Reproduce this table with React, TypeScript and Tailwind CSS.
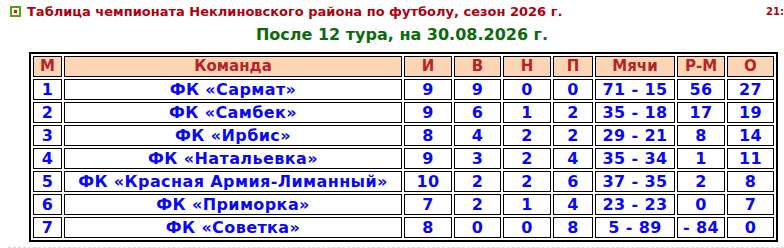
const rows = [
  { m: 1, team: 'ФК «Сармат»', i: 9, w: 9, d: 0, l: 0, goals: '71 - 15', diff: '56', pts: 27 },
  { m: 2, team: 'ФК «Самбек»', i: 9, w: 6, d: 1, l: 2, goals: '35 - 18', diff: '17', pts: 19 },
  { m: 3, team: 'ФК «Ирбис»', i: 8, w: 4, d: 2, l: 2, goals: '29 - 21', diff: '8', pts: 14 },
  { m: 4, team: 'ФК «Натальевка»', i: 9, w: 3, d: 2, l: 4, goals: '35 - 34', diff: '1', pts: 11 },
  { m: 5, team: 'ФК «Красная Армия-Лиманный»', i: 10, w: 2, d: 2, l: 6, goals: '37 - 35', diff: '2', pts: 8 },
  { m: 6, team: 'ФК «Приморка»', i: 7, w: 2, d: 1, l: 4, goals: '23 - 23', diff: '0', pts: 7 },
  { m: 7, team: 'ФК «Советка»', i: 8, w: 0, d: 0, l: 8, goals: '5 - 89', diff: '- 84', pts: 0 },
];

const head = [
  { label: 'М', w: 'w-[29px]' },
  { label: 'Команда', w: 'w-[338px]' },
  { label: 'И', w: 'w-[48px]' },
  { label: 'В', w: 'w-[47px]' },
  { label: 'Н', w: 'w-[48px]' },
  { label: 'П', w: 'w-[40px]' },
  { label: 'Мячи', w: 'w-[80px]' },
  { label: 'Р-М', w: 'w-[48px]' },
  { label: 'О', w: 'w-[47px]' },
];

const cell = 'h-[21px] p-0 border border-black text-center align-middle leading-[19px] whitespace-nowrap';

export default function App() {
  return (
    <div className="w-[784px] h-[248px] overflow-hidden bg-white font-['DejaVu_Sans',Verdana,sans-serif] font-bold">
      <div className="flex items-start pt-[5px] pl-[10px] h-[22px]">
        <span className="mt-[1px] w-[11px] h-[11px] border-2 border-[#5f9e10] flex items-center justify-center shrink-0">
          <span className="w-[3px] h-[3px] bg-[#d0101a]" />
        </span>
        <span className="ml-[6px] text-[13px] leading-[14px] text-[#b0000e] whitespace-nowrap flex-1">
          Таблица чемпионата Неклиновского района по футболу, сезон 2026 г.
        </span>
        <span className="w-[18px] shrink-0 whitespace-nowrap text-[10px] leading-[12px] text-[#b0000e] mt-[1px]">
          21:
        </span>
      </div>
      <div className="pl-[20px] pt-[3px] text-center text-[16px] leading-[20px] text-[#0b6b0b]">
        После 12 тура, на 30.08.2026 г.
      </div>
      <div className="pl-[29px] pt-[7px]">
        <table className="border-separate border-spacing-[2px] border-2 border-black">
          <thead>
            <tr>
              {head.map((h) => (
                <th key={h.label} className={`${cell} ${h.w} bg-[#fcd5b4] text-[#b8232a] text-[15px] font-bold`}>
                  {h.label}
                </th>
              ))}
            </tr>
          </thead>
          <tbody className="text-[#0808f8] text-[16px] tracking-[0.4px]">
            {rows.map((r) => (
              <tr key={r.m}>
                <td className={cell}>{r.m}</td>
                <td className={cell}>{r.team}</td>
                <td className={cell}>{r.i}</td>
                <td className={cell}>{r.w}</td>
                <td className={cell}>{r.d}</td>
                <td className={cell}>{r.l}</td>
                <td className={cell}>{r.goals}</td>
                <td className={cell}>{r.diff}</td>
                <td className={cell}>{r.pts}</td>
              </tr>
            ))}
          </tbody>
        </table>
      </div>
      <div className="ml-[8px] mt-[5px] border-t border-dashed border-[#d8d8d8]" />
    </div>
  );
}
